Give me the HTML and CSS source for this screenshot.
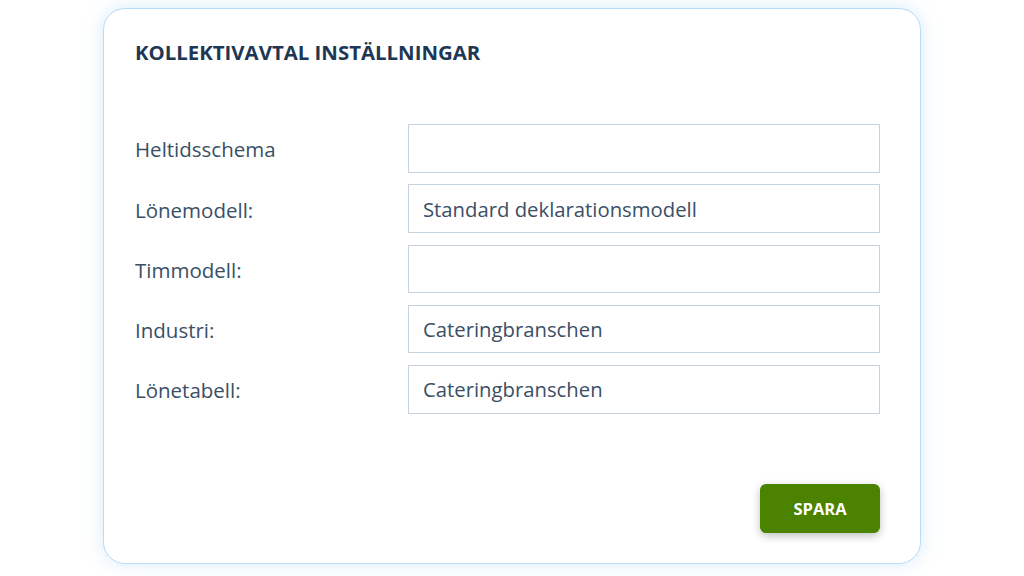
FILE: index.html
```html
<!DOCTYPE html>
<html lang="sv">
<head>
<meta charset="utf-8">
<title>Kollektivavtal inställningar</title>
<link rel="stylesheet" href="styles.css">
</head>
<body>
<main class="card">
  <h1 class="title">KOLLEKTIVAVTAL INSTÄLLNINGAR</h1>
  <form class="form">
    <div class="row">
      <label class="label">Heltidsschema</label>
      <div class="field"></div>
    </div>
    <div class="row">
      <label class="label">Lönemodell:</label>
      <div class="field">Standard deklarationsmodell</div>
    </div>
    <div class="row">
      <label class="label">Timmodell:</label>
      <div class="field"></div>
    </div>
    <div class="row">
      <label class="label">Industri:</label>
      <div class="field">Cateringbranschen</div>
    </div>
    <div class="row">
      <label class="label">Lönetabell:</label>
      <div class="field">Cateringbranschen</div>
    </div>
  </form>
  <div class="actions">
    <button class="btn" type="button">SPARA</button>
  </div>
</main>
</body>
</html>
```

FILE: styles.css
```css
* { box-sizing: border-box; }
html, body { margin: 0; padding: 0; background: #ffffff; }
body {
  font-family: "Open Sans", "Noto Sans", sans-serif;
  width: 1024px;
  height: 576px;
  overflow: hidden;
}
.card {
  width: 818px;
  height: 556px;
  margin: 8px auto 0;
  border: 1px solid #b5ddf7;
  border-radius: 22px;
  box-shadow: 0 0 18px rgba(140, 200, 240, 0.35);
  padding: 30px 40px 30px 31px;
  display: flex;
  flex-direction: column;
  background: #fff;
}
.title {
  margin: 0;
  font-size: 20.4px;
  line-height: 26px;
  font-weight: 700;
  color: #1d3754;
  letter-spacing: 0;
}
.form {
  margin-top: 59px;
  display: flex;
  flex-direction: column;
  gap: 11.75px;
}
.row {
  display: flex;
  align-items: center;
}
.label {
  width: 273px;
  font-size: 20.5px;
  color: #3a4f66;
  padding-top: 2px;
}
.field {
  flex: 1;
  height: 48.5px;
  border: 1px solid #c6d2dd;
  display: flex;
  align-items: center;
  padding: 0 14px;
  font-size: 20.3px;
  color: #3a4f66;
}
.actions {
  margin-top: auto;
  display: flex;
  justify-content: flex-end;
}
.btn {
  width: 120px;
  height: 49px;
  border: none;
  border-radius: 6px;
  background: #4b8200;
  color: #fff;
  font-family: inherit;
  font-weight: 700;
  font-size: 16.5px;
  letter-spacing: 0;
  box-shadow: 0 3px 8px rgba(0, 0, 0, 0.25);
}
```
